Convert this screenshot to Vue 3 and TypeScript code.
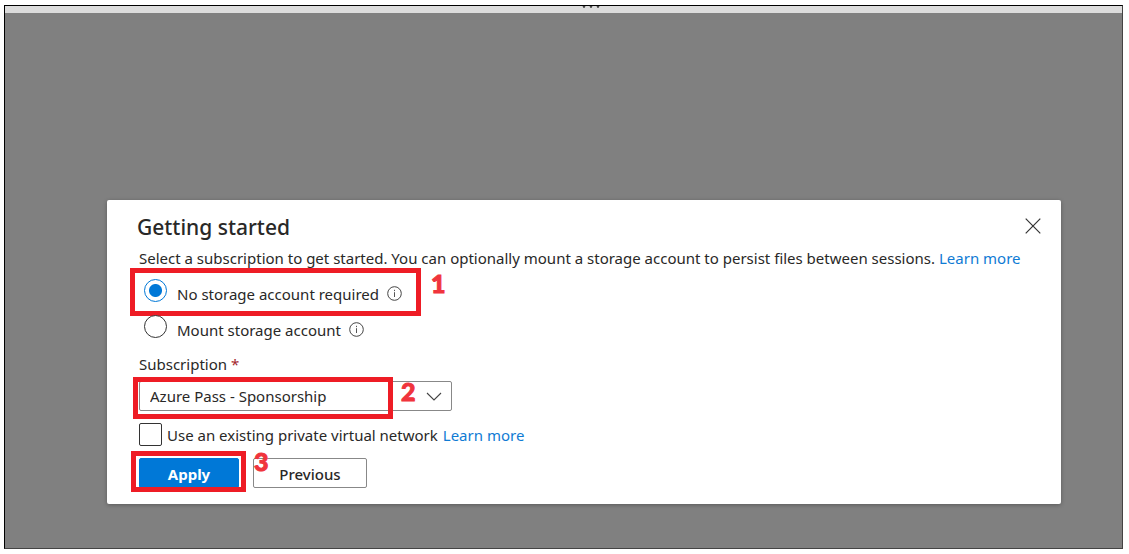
<script setup lang="ts">
import { ref } from 'vue'

type StorageMode = 'none' | 'mount'

interface StorageOption {
  value: StorageMode
  label: string
}

const options: StorageOption[] = [
  { value: 'none', label: 'No storage account required' },
  { value: 'mount', label: 'Mount storage account' },
]

const mode = ref<StorageMode>('none')
const subscription = ref('Azure Pass - Sponsorship')
const useNetwork = ref(false)
</script>

<template>
  <main class="shell">
    <div class="grip">
      <svg class="dots" width="18" height="3" viewBox="0 0 18 3" aria-hidden="true">
        <path d="M0.5 0h3l-1 2h-1zM7.5 0h3l-1 2h-1zM14.5 0h3l-1 2h-1z" fill="#444" />
      </svg>
    </div>

    <section class="dialog" role="dialog" aria-labelledby="title">
      <header class="head">
        <h1 id="title">Getting started</h1>
        <button class="close" type="button" aria-label="Close">
          <svg width="16" height="16" viewBox="0 0 16 16">
            <path d="M0.7 0.7l14.6 14.6M15.3 0.7L0.7 15.3" fill="none" stroke="#333" stroke-width="1.2" />
          </svg>
        </button>
      </header>

      <p class="intro">
        Select a subscription to get started. You can optionally mount a storage account to persist files between
        sessions. <a href="#">Learn more</a>
      </p>

      <div class="options" role="radiogroup" aria-labelledby="title">
        <div v-for="option in options" :key="option.value" class="option">
          <input :id="option.value" v-model="mode" type="radio" name="storage" :value="option.value" />
          <label :for="option.value">{{ option.label }}</label>
          <svg class="info" width="15" height="15" viewBox="0 0 15 15" aria-hidden="true">
            <circle cx="7.5" cy="7.5" r="6.8" fill="none" stroke="#444" stroke-width="1" />
            <path d="M7.5 6.2v4.8M7.5 3.8v1.3" fill="none" stroke="#555" stroke-width="1" />
          </svg>
          <template v-if="option.value === 'none'">
            <span class="mark mark-storage"></span>
            <span class="step step-storage">1</span>
          </template>
        </div>
      </div>

      <label class="field-label" for="subscription">Subscription <span class="required">*</span></label>
      <div class="picker">
        <select id="subscription" v-model="subscription">
          <option>Azure Pass - Sponsorship</option>
        </select>
        <svg class="chevron" width="16" height="9" viewBox="0 0 16 9" aria-hidden="true">
          <path d="M1 1l7 7 7-7" fill="none" stroke="#444" stroke-width="1.1" />
        </svg>
        <span class="mark mark-picker"></span>
        <span class="step step-picker">2</span>
      </div>

      <div class="network">
        <input id="network" v-model="useNetwork" type="checkbox" />
        <label for="network">Use an existing private virtual network</label>
        <a href="#">Learn more</a>
      </div>

      <div class="actions">
        <button class="btn primary" type="button">Apply</button>
        <button class="btn" type="button">Previous</button>
        <span class="mark mark-apply"></span>
        <span class="step step-apply">3</span>
      </div>
    </section>
  </main>
</template>

<style>
body {
  background: #fff;
}
</style>

<style scoped>
* {
  box-sizing: border-box;
}
.shell {
  display: flex;
  flex-direction: column;
  min-height: calc(100vh - 10px);
  margin: 5px 6px 5px 4px;
  border: 1px solid #000;
  border-right-color: #444;
  border-bottom-color: #444;
  background: #808080;
  color: #292827;
  font: 15px/20px "Noto Sans", "Open Sans", sans-serif;
}
.grip {
  display: flex;
  justify-content: center;
  height: 7px;
  margin-bottom: auto;
  padding-left: 54px;
  background: #dcdcdc;
}
.dialog {
  margin: 40px 61px 44px 102px;
  padding: 14px 20px 16px 32px;
  border-radius: 2px;
  background: #fff;
  box-shadow: 0 1px 4px rgba(0, 0, 0, 0.3);
}
.head {
  display: flex;
  justify-content: space-between;
  align-items: center;
  height: 26px;
}
h1 {
  margin: 0 0 0 -2px;
  font-size: 21px;
  font-weight: 500;
  line-height: 26px;
}
.close {
  display: flex;
  padding: 0 0 2px;
  border: 0;
  background: none;
}
.intro {
  margin: 8px 0;
}
a {
  color: #0f7bd4;
  text-decoration: none;
}
.option {
  position: relative;
  display: flex;
  align-items: flex-start;
  height: 36px;
}
.option label {
  margin: 8px 8px 0 10px;
}
.info {
  margin-top: 10px;
}
input {
  flex: none;
  appearance: none;
  margin: 0;
  border: 1px solid #333;
  background: #fff;
}
input[type='radio'] {
  width: 23px;
  height: 23px;
  margin: 3px 0 0 5px;
  border-radius: 50%;
}
input[type='radio']:checked {
  border-color: #0078d7;
  background: radial-gradient(circle, #0078d7 6px, #fff 7px);
}
.field-label {
  display: block;
  margin-top: 6px;
}
.required {
  color: #a4262c;
}
.picker {
  position: relative;
  width: 313px;
  margin-top: 7px;
}
select {
  display: block;
  appearance: none;
  width: 100%;
  height: 30px;
  padding: 0 40px 0 10px;
  border: 1px solid #888;
  border-radius: 2px;
  background: #fff;
  color: inherit;
  font: inherit;
}
.chevron {
  position: absolute;
  top: 11px;
  right: 10px;
}
.network {
  display: flex;
  align-items: center;
  gap: 5px;
  height: 23px;
  margin-top: 12px;
}
input[type='checkbox'] {
  width: 23px;
  height: 23px;
  border-radius: 2px;
}
.actions {
  position: relative;
  display: flex;
  gap: 14px;
  margin-top: 12px;
}
.btn {
  width: 114px;
  height: 30px;
  padding: 2px 0 0;
  border: 1px solid #888;
  border-radius: 2px;
  background: #fff;
  color: inherit;
  font: inherit;
  font-weight: 500;
}
.primary {
  width: 100px;
  border-color: #0078d7;
  background: #0078d7;
  color: #fff;
  font-weight: 700;
}
.mark {
  position: absolute;
  border: 5px solid #ee1c25;
  pointer-events: none;
}
.mark-storage {
  top: -8px;
  left: -9px;
  width: 291px;
  height: 48px;
}
.mark-picker {
  top: -4px;
  left: -6px;
  width: 260px;
  height: 42px;
}
.mark-apply {
  top: -7px;
  left: -8px;
  width: 115px;
  height: 41px;
}
.step {
  position: absolute;
  color: #f0343c;
  font-family: Lato, "Noto Sans", sans-serif;
  font-size: 25px;
  font-weight: 900;
  line-height: 24px;
  -webkit-text-stroke: 1px #f0343c;
}
.step-storage {
  top: -5px;
  left: 292px;
}
.step-picker {
  top: -2px;
  left: 262px;
}
.step-apply {
  top: -9px;
  left: 115px;
}
</style>
